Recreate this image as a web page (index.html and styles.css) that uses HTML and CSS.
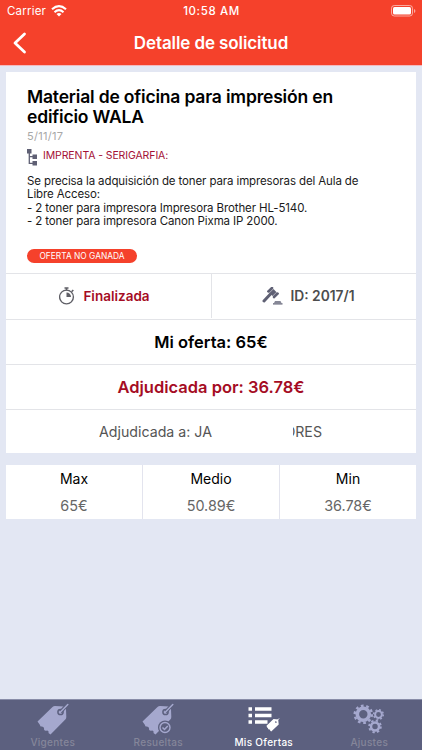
FILE: index.html
```
<!DOCTYPE html>
<html lang="es">
<head>
    <meta charset="UTF-8">
    <meta name="viewport" content="width=device-width, initial-scale=1">
    <title>Detalle de solicitud</title>
    <link rel="stylesheet" href="styles.css">
</head>
<body>
    <svg width="0" height="0" class="symbols">
        <symbol id="tag" viewBox="0 0 32 32">
            <path fill="currentColor" d="M.5 18.500 15.500 4Q16.500 3 18 3l9 .5Q29 4 29 6l.3 8q0 1.500-1 2.500L13.500 31.500l-2-1.500q.5-2.500-1.500-2.500-2 1-3-1 .5-2.500-2-3-2 .5-2-1.500Z"/>
            <circle cx="23.500" cy="9" r="2.600" fill="none" stroke="#5c607f" stroke-width="1.500"/>
            <path d="M23.500 9 30.500 1.500" stroke="#5c607f" stroke-width="3.500"/>
            <path d="M23.500 9 30.800 1.500" stroke="currentColor" stroke-width="1.500" stroke-linecap="round"/>
        </symbol>
    </svg>

    <header class="header">
        <div class="status-bar">
            <div class="carrier">
                <span>Carrier</span>
                <svg width="16" height="12" viewBox="0 0 16 12" fill="none" stroke="#fff" stroke-width="2.100">
                    <path d="M1 4.300Q8-2 15 4.300M3.500 7.200Q8 3.200 12.500 7.200"/>
                    <path d="M8 11.500 5.500 9Q8 6.900 10.500 9Z" fill="#fff" stroke="none"/>
                </svg>
            </div>
            <span class="time">10:58 AM</span>
            <svg class="battery" width="25" height="12" viewBox="0 0 25 12">
                <rect x=".5" y=".5" width="21" height="10.500" rx="2.800" fill="none" stroke="#fff" stroke-opacity=".55"/>
                <rect x="2" y="2" width="18" height="7.500" rx="1.500" fill="#fff"/>
                <path d="M23 4v4q1.400-.6 1.400-2T23 4Z" fill="#fff" fill-opacity=".55"/>
            </svg>
        </div>
        <div class="nav-bar">
            <svg class="back" width="14" height="22" viewBox="0 0 14 22">
                <path d="M11.500 2 2 11l9.500 9" fill="none" stroke="#fff" stroke-width="2.800" stroke-linecap="round" stroke-linejoin="round"/>
            </svg>
            <h1 class="nav-title">Detalle de solicitud</h1>
        </div>
    </header>

    <main class="content">
        <section class="card">
            <div class="summary">
                <h2 class="title">Material de oficina para impresión en<br>edificio WALA</h2>
                <div class="date">5/11/17</div>
                <div class="category">
                    <svg width="11" height="17" viewBox="0 0 11 17" fill="#5f6074">
                        <path d="M0 0h4.500v4.500H0zM5.500 5.500H10V10H5.500zM5.500 12H10v4.500H5.500z"/>
                        <path d="M2.300 4v10.300h4M2.300 7.700h4" fill="none" stroke="#5f6074" stroke-width="1.300"/>
                    </svg>
                    <span>IMPRENTA - SERIGARFIA:</span>
                </div>
                <p class="description">Se precisa la adquisición de toner para impresoras del Aula de<br>Libre Acceso:<br>- 2 toner para impresora Impresora Brother HL-5140.<br>- 2 toner para impresora Canon Pixma IP 2000.</p>
                <span class="badge">OFERTA NO GANADA</span>
            </div>
            <!-- Estado e identificador -->
            <div class="row status-row">
                <div class="cell state">
                    <svg width="16" height="18" viewBox="0 0 16 18" fill="none" stroke="#5f5f66">
                        <circle cx="7.500" cy="10" r="6.900" stroke-width="1.400"/>
                        <path d="M5.500 1h4M7.500 1v2.500M12.600 4.700l1.700-1.700" stroke-width="1.600"/>
                        <path d="M7.500 10V5.500A4.500 4.500 0 0 1 12 10Z" fill="#5f5f66" stroke="none"/>
                    </svg>
                    <span>Finalizada</span>
                </div>
                <div class="cell ident">
                    <svg width="21" height="18" viewBox="0 0 21 18" fill="#5f6074">
                        <path d="M8.500 7 2 14" stroke="#5f6074" stroke-width="3" stroke-linecap="round"/>
                        <g transform="rotate(45 11 5.500)">
                            <rect x="7.500" y="2.800" width="7" height="5.400"/>
                            <rect x="5.800" y="1.800" width="2.400" height="7.400" rx=".8"/>
                            <rect x="13.800" y="1.800" width="2.400" height="7.400" rx=".8"/>
                            <path d="M8.700 2.800v5.400M13.300 2.800v5.400" stroke="#fff" stroke-width=".5"/>
                        </g>
                        <path d="M11 16.200h9.500v1.300H11zM13 14.200h5.500l1 1.500h-7.500z"/>
                    </svg>
                    <span>ID: 2017/1</span>
                </div>
            </div>
            <div class="row offer"><span>Mi oferta: 65€</span></div>
            <div class="row awarded"><span>Adjudicada por: 36.78€</span></div>
            <div class="row winner">
                <span>Adjudicada a: JA</span>
                <span class="winner-end"><span>ORES</span></span>
            </div>
        </section>

        <section class="card stats">
            <div class="stat"><span class="stat-name">Max</span><span class="stat-value">65€</span></div>
            <div class="stat"><span class="stat-name">Medio</span><span class="stat-value">50.89€</span></div>
            <div class="stat"><span class="stat-name">Min</span><span class="stat-value">36.78€</span></div>
        </section>
    </main>

    <nav class="tab-bar">
        <a class="tab">
            <svg width="32" height="32"><use href="#tag"/></svg>
            <span>Vigentes</span>
        </a>
        <a class="tab">
            <svg width="32" height="32" viewBox="0 0 32 32">
                <use href="#tag" width="32" height="32"/>
                <circle cx="23" cy="24.500" r="7" fill="#5c607f"/>
                <circle cx="23" cy="24.500" r="5" fill="none" stroke="currentColor" stroke-width="1.400"/>
                <path d="m20.500 24.500 2 2 3.300-3.500" fill="none" stroke="currentColor" stroke-width="1.500"/>
            </svg>
            <span>Resueltas</span>
        </a>
        <a class="tab active">
            <svg width="32" height="32" viewBox="0 0 32 32">
                <path d="M.5 4.300H4v3.500H.5zM.5 10.800H4v3.500H.5zM.5 17.300H4v3.500H.5zM7 4.300h16.500v3.500H7zM7 10.800h16.500v3.500H7zM7 17.300h12.500v3.500H7z" fill="currentColor"/>
                <path d="m18.500 22.800 7-6.800 4.700.5.500 5-7.500 7-1-.8q.2-1.200-.8-1.200-1 .4-1.300-.7.200-1-1-1.300Z" fill="currentColor" stroke="#5c607f" stroke-width="1" paint-order="stroke"/>
                <circle cx="27.900" cy="18.900" r=".9" fill="#5c607f"/>
                <path d="m28 18.700 3-3.200" stroke="currentColor"/>
            </svg>
            <span>Mis Ofertas</span>
        </a>
        <a class="tab">
            <svg width="32" height="32" viewBox="0 0 32 32" fill="none" stroke="currentColor">
                <circle cx="10.300" cy="11.300" r="6" stroke-width="3.600"/>
                <circle cx="10.300" cy="11.300" r="8.600" stroke-width="2.400" stroke-dasharray="2.700 2.704"/>
                <circle cx="25.500" cy="11.500" r="3.400" stroke-width="2"/>
                <circle cx="25.500" cy="11.500" r="4.800" stroke-width="1.500" stroke-dasharray="1.885 1.885"/>
                <circle cx="22" cy="23.500" r="4" stroke-width="2.500"/>
                <circle cx="22" cy="23.500" r="5.900" stroke-width="1.800" stroke-dasharray="2.317 2.317"/>
            </svg>
            <span>Ajustes</span>
        </a>
    </nav>
</body>
</html>
```

FILE: styles.css
```
* {
    box-sizing: border-box;
}

body {
    margin: 0;
    height: 750px;
    display: flex;
    flex-direction: column;
    font-family: Inter, "Liberation Sans", sans-serif;
    background-color: #e3e7f3;
    color: #000;
    white-space: nowrap;
    overflow: hidden;
}

h1, h2, p {
    margin: 0;
}

.symbols {
    position: absolute;
}

/* Header */
.header {
    height: 66px;
    background-color: #f5412b;
    border-bottom: 1px solid #f3b9bd;
    color: #fff;
}

.status-bar {
    height: 22px;
    display: grid;
    grid-template-columns: 1fr auto 1fr;
    align-items: center;
    padding: 0 6px 0 7px;
    font-size: 11.5px;
}

.carrier {
    display: flex;
    align-items: center;
    gap: 5px;
}

.carrier span {
    letter-spacing: 0.2px;
}

.time {
    font-weight: 500;
    letter-spacing: 0.6px;
}

.battery {
    justify-self: end;
}

.nav-bar {
    height: 42px;
    display: grid;
    grid-template-columns: 1fr auto 1fr;
    align-items: center;
    padding: 0 13px;
}

.nav-title {
    font-size: 17px;
    font-weight: 600;
    letter-spacing: -0.1px;
}

/* Cards */
.content {
    flex: 1;
    padding: 6px 6px 0;
}

.card {
    background-color: #fff;
    margin-bottom: 12px;
}

.summary {
    height: 201px;
    padding: 15px 21px 0;
}

.title {
    font-size: 17.5px;
    line-height: 20px;
    font-weight: 600;
    letter-spacing: -0.18px;
}

.date {
    margin-top: 2px;
    font-size: 11px;
    line-height: 15px;
    letter-spacing: 0.3px;
    color: #a8a8a8;
}

.category {
    height: 17px;
    margin-top: 5px;
    display: flex;
    gap: 5px;
    font-size: 10.5px;
    line-height: 13px;
    letter-spacing: -0.1px;
    color: #a40f35;
}

.description {
    margin-top: 9px;
    font-size: 11.5px;
    line-height: 13.4px;
    letter-spacing: -0.12px;
    color: #1a1a1a;
}

.badge {
    display: flex;
    align-items: center;
    justify-content: center;
    width: 110px;
    height: 14px;
    margin-top: 20px;
    border-radius: 7px;
    background-color: #f5412b;
    color: #fff;
    font-size: 8.4px;
}

.row {
    height: 45px;
    display: flex;
    align-items: center;
    justify-content: center;
    padding-bottom: 1px;
    border-top: 1px solid #e3e4e8;
}

.status-row {
    height: 46px;
    align-items: stretch;
}

.cell {
    width: 205px;
    display: flex;
    align-items: center;
    justify-content: center;
    gap: 7px;
    font-size: 13.5px;
    font-weight: 600;
}

.state {
    gap: 8px;
    padding-right: 8px;
    color: #a50c24;
}

.ident {
    padding-right: 11px;
    border-left: 1px solid #e3e4e8;
    color: #4d4d4d;
}

.ident span {
    font-size: 13.8px;
}

.offer,
.awarded {
    font-size: 16.5px;
    font-weight: 600;
}

.awarded {
    color: #a50c24;
}

.winner {
    height: 44px;
    justify-content: space-between;
    padding: 0 94px 1px 93px;
    font-size: 14.2px;
    color: #555;
}

.winner-end {
    display: flex;
    justify-content: flex-end;
    width: 29px;
    overflow: hidden;
}

.stats {
    display: grid;
    grid-template-columns: 136px 137px 137px;
    height: 54px;
}

.stat {
    display: flex;
    flex-direction: column;
    align-items: center;
    border-left: 1px solid #e3e4ee;
    line-height: 27px;
    font-size: 14px;
}

.stat:first-child {
    border-left: none;
}

.stat-value {
    font-size: 14.4px;
    color: #666;
}

/* Tab bar */
.tab-bar {
    height: 51px;
    display: grid;
    grid-template-columns: repeat(4, 1fr);
    border-top: 1px solid #898da8;
    background-color: #5c607f;
}

.tab {
    display: flex;
    flex-direction: column;
    align-items: center;
    padding-top: 3px;
    color: #a5a8ce;
    font-size: 10px;
    line-height: 14px;
    font-weight: 500;
}

.tab span {
    letter-spacing: 0.3px;
    color: #85869a;
}

.tab.active,
.tab.active span {
    color: #fff;
}
```
